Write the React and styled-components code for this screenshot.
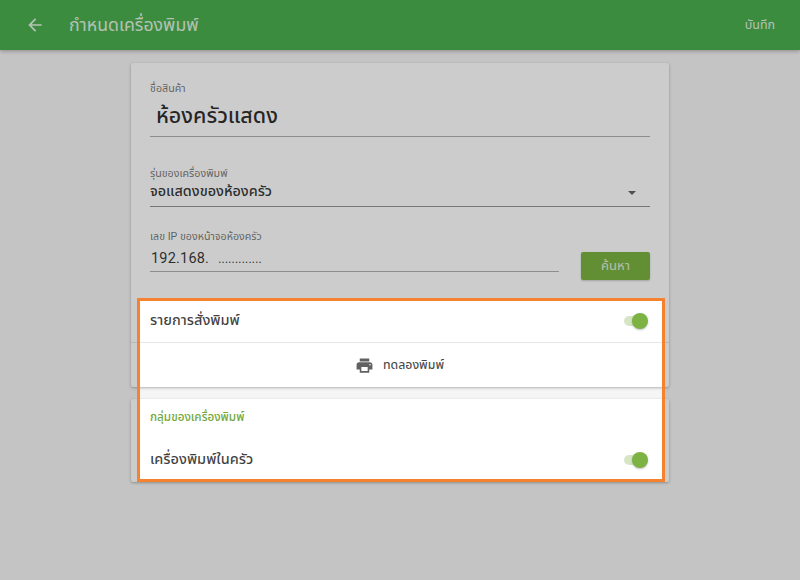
import React from 'react'
import styled, { createGlobalStyle } from 'styled-components'
import { MdArrowBack, MdPrint } from 'react-icons/md'

const GlobalStyle = createGlobalStyle`
  html, body { margin: 0; padding: 0; }
  body {
    font-family: Roboto, "Noto Sans", "Noto Sans Thai", "Liberation Sans", sans-serif;
    background: #f5f5f5;
    color: rgba(0, 0, 0, 0.87);
  }
  * { box-sizing: border-box; }
`

const Page = styled.div`
  position: relative;
  width: 800px;
  height: 580px;
  overflow: hidden;
  background: #f5f5f5;
`

const Header = styled.header`
  height: 50px;
  display: flex;
  align-items: center;
  padding: 0 25px;
  background: #4caf50;
  color: rgba(255, 255, 255, 0.85);
  box-shadow: 0 1px 4px rgba(0, 0, 0, 0.3);
`

const BackIcon = styled(MdArrowBack)`
  width: 20px;
  height: 20px;
  margin-right: 24px;
`

const Title = styled.h1`
  flex: 1;
  margin: 0;
  font-size: 17.7px;
  font-weight: 400;
`

const SaveLink = styled.span`
  font-size: 12.5px;
`

const Content = styled.main`
  width: 538px;
  margin: 13px auto 0;
  display: flex;
  flex-direction: column;
  gap: 12px;
`

const Card = styled.section`
  background: #fff;
  border-radius: 2px;
  box-shadow: 0 1px 3px rgba(0, 0, 0, 0.28);
`

const Form = styled.div`
  padding: 19px 19px 0;
  height: 235px;
`

const Field = styled.div`
  display: flex;
  flex-direction: column;
  margin-bottom: ${p => p.$gap || 0}px;
`

const Label = styled.label`
  font-size: 10.7px;
  line-height: 14px;
  color: rgba(0, 0, 0, 0.55);
`

const NameInput = styled.div`
  height: 41px;
  padding: 6px 0 0 6px;
  font-size: 21.5px;
  font-weight: 500;
  line-height: 28px;
  color: rgba(0, 0, 0, 0.82);
  border-bottom: 1px solid rgba(0, 0, 0, 0.3);
`

const SelectInput = styled.div`
  height: 26px;
  display: flex;
  align-items: center;
  justify-content: space-between;
  padding: 0 14px 4px 0;
  font-size: 14.4px;
  font-weight: 500;
  color: rgba(0, 0, 0, 0.8);
  border-bottom: 1px solid rgba(0, 0, 0, 0.42);
`

const Caret = styled.span`
  width: 0;
  height: 0;
  margin-top: 3px;
  border-left: 4px solid transparent;
  border-right: 4px solid transparent;
  border-top: 4px solid rgba(0, 0, 0, 0.6);
`

const IpRow = styled.div`
  display: flex;
  align-items: flex-end;
  gap: 22px;
`

const IpField = styled.div`
  flex: 1;
  display: flex;
  flex-direction: column;
`

const IpInput = styled.div`
  height: 28px;
  display: flex;
  align-items: center;
  gap: 9px;
  padding: 2px 0 0 1px;
  font-size: 14.5px;
  letter-spacing: 0.2px;
  color: rgba(0, 0, 0, 0.8);
  border-bottom: 1px solid rgba(0, 0, 0, 0.3);
`

const Dots = styled.span`
  font-size: 12px;
`

const SearchButton = styled.button`
  width: 69px;
  height: 28px;
  margin-bottom: -8px;
  border: 0;
  border-radius: 2px;
  background: #7cb342;
  color: rgba(255, 255, 255, 0.8);
  font: inherit;
  font-size: 13px;
  box-shadow: 0 1px 2px rgba(0, 0, 0, 0.2);
`

const ToggleRow = styled.div`
  height: ${p => p.$height}px;
  display: flex;
  align-items: center;
  justify-content: space-between;
  padding: 1px 19px 0;
  font-size: 14.5px;
  font-weight: 500;
  color: rgba(0, 0, 0, 0.75);
  border-bottom: ${p => (p.$divider ? '1px solid #e6e6e6' : '0')};
`

const Track = styled.span`
  position: relative;
  width: 22px;
  height: 10px;
  margin-right: 4px;
  border-radius: 5px;
  background: #d6e6c5;
`

const Thumb = styled.span`
  position: absolute;
  top: -3px;
  right: -2px;
  width: 16px;
  height: 16px;
  border-radius: 50%;
  background: #7cb342;
  box-shadow: 0 1px 2px rgba(0, 0, 0, 0.25);
`

const PrintRow = styled.div`
  height: 44px;
  display: flex;
  align-items: center;
  justify-content: center;
  gap: 9px;
  padding-right: 1px;
  font-size: 12.3px;
  font-weight: 500;
  color: rgba(0, 0, 0, 0.72);
`

const PrintIcon = styled(MdPrint)`
  width: 19px;
  height: 19px;
  color: #616161;
`

const SectionLabel = styled.div`
  height: 38px;
  padding: 10px 19px 0;
  font-size: 11.7px;
  font-weight: 500;
  color: #73a83d;
`

const Highlight = styled.div`
  position: absolute;
  left: 137px;
  top: 298px;
  width: 528px;
  height: 184px;
  border: 3px solid #f58230;
  box-shadow: 0 0 0 1000px rgba(0, 0, 0, 0.2);
  pointer-events: none;
`

const Switch = () => (
  <Track>
    <Thumb />
  </Track>
)

export default function App() {
  return (
    <Page>
      <GlobalStyle />
      <Header>
        <BackIcon />
        <Title>กำหนดเครื่องพิมพ์</Title>
        <SaveLink>บันทึก</SaveLink>
      </Header>
      <Content>
        <Card>
          <Form>
            <Field $gap={30}>
              <Label>ชื่อสินค้า</Label>
              <NameInput>ห้องครัวแสดง</NameInput>
            </Field>
            <Field $gap={23}>
              <Label>รุ่นของเครื่องพิมพ์</Label>
              <SelectInput>
                จอแสดงของห้องครัว
                <Caret />
              </SelectInput>
            </Field>
            <IpRow>
              <IpField>
                <Label>เลข IP ของหน้าจอห้องครัว</Label>
                <IpInput>
                  192.168.
                  <Dots>.............</Dots>
                </IpInput>
              </IpField>
              <SearchButton>ค้นหา</SearchButton>
            </IpRow>
          </Form>
          <ToggleRow $height={45} $divider>
            รายการสั่งพิมพ์
            <Switch />
          </ToggleRow>
          <PrintRow>
            <PrintIcon />
            ทดลองพิมพ์
          </PrintRow>
        </Card>
        <Card>
          <SectionLabel>กลุ่มของเครื่องพิมพ์</SectionLabel>
          <ToggleRow $height={45}>
            เครื่องพิมพ์ในครัว
            <Switch />
          </ToggleRow>
        </Card>
      </Content>
      <Highlight />
    </Page>
  )
}
